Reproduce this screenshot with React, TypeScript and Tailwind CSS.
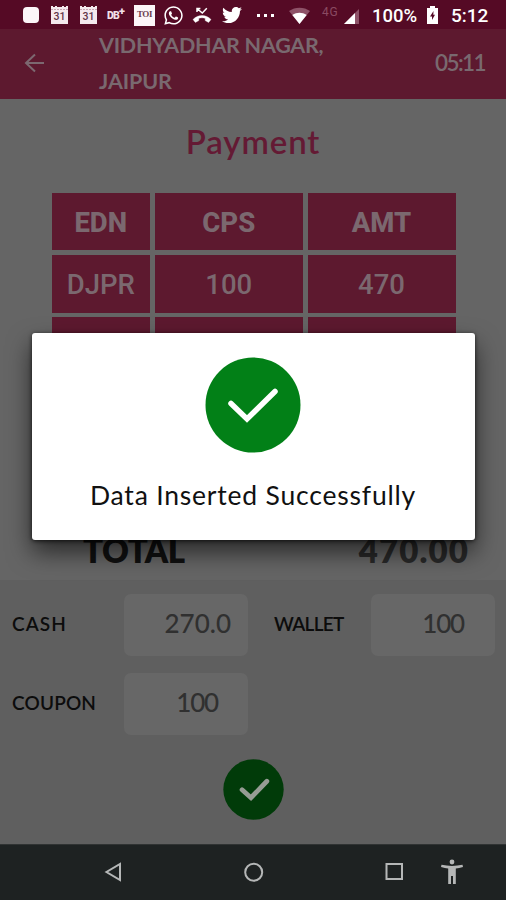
import type { ReactNode } from "react";
import { FaTwitter, FaWhatsapp } from "react-icons/fa";

const GEO = "font-['Lato','Open_Sans',sans-serif]";
const ROBOTO = "font-['Roboto',sans-serif]";

function Calendar() {
  return (
    <svg width="19" height="20" viewBox="0 0 19 20" className="shrink-0">
      <path d="M1 1h2v1h2V1h2v1h5V1h2v1h2V1h2v18H1z" fill="#f4e9ee" />
      <path d="M1 4.5h17" stroke="#b58a9b" strokeWidth=".7" strokeDasharray="2 1" />
      <text x="9.5" y="14.5" textAnchor="middle" fontSize="10.5" fontWeight="500" fill="#62364a" fontFamily="Roboto, sans-serif">31</text>
    </svg>
  );
}

function StatusBar() {
  return (
    <div className={`relative flex h-[29px] shrink-0 items-center bg-[#550a25] pt-px text-white ${ROBOTO}`}>
      <div className="ml-[23px] h-4 w-4 shrink-0 rounded-[4px] bg-[#fcf5f8]" />
      <div className="ml-[11px] flex"><Calendar /></div>
      <div className="ml-[10px] flex"><Calendar /></div>
      <div className="ml-[9px] flex w-[19px] items-start text-[10.5px] leading-4 font-black tracking-[-0.8px] text-[#f0dfe6]">
        <span className="pt-px">DB</span><span className="text-[11px] leading-[9px]">+</span>
      </div>
      <div className="ml-[8px] flex h-[21px] w-[21px] shrink-0 items-center justify-center bg-[#fcf5f8] font-['Liberation_Serif',serif] text-[9px] font-bold tracking-[-0.4px] text-[#6b3b4e]">TOI</div>
      <FaWhatsapp className="ml-[8px] shrink-0" size={21} />
      <svg className="ml-[8px] shrink-0" width="20" height="18" viewBox="0 0 20 18">
        <path d="M5 6V2.5H8.4M5.3 2.8L10.3 7L14.8 2.3" stroke="#fff" strokeWidth="1.5" fill="none" />
        <path d="M1 13.5C6 8.2 14 8.2 19 13.5L16.6 16.4L13.2 14.6V12.3C11 11.6 9 11.6 6.8 12.3V14.6L3.4 16.4Z" fill="#fff" stroke="#fff" strokeWidth=".4" strokeLinejoin="round" />
      </svg>
      <FaTwitter className="ml-[10px] shrink-0" size={20} />
      <div className="ml-[15px] flex gap-[4px]">
        <i className="h-[3px] w-[3px] bg-white" /><i className="h-[3px] w-[3px] bg-white" /><i className="h-[3px] w-[3px] bg-white" />
      </div>
      <svg className="ml-[15px] shrink-0" width="21" height="17" viewBox="0 0 21 17">
        <path d="M0 4C6-.5 15-.5 21 4L10.5 17Z" fill="#8e5268" />
        <path d="M3.3 8C8 5 13 5 17.7 8L10.5 17Z" fill="#fff" />
      </svg>
      <span className="ml-[12px] mb-[7px] w-[18px] text-[12px] leading-none tracking-[0.8px] text-[#8a4a62]">4G</span>
      <svg className="ml-[4px] mt-[2px] shrink-0" width="15" height="15" viewBox="0 0 15 15">
        <path d="M15 0V15H0Z" fill="#8e5268" /><path d="M11 4V15H0Z" fill="#fff" />
      </svg>
      <span className="ml-[13px] mt-[2px] w-[46px] text-[18.5px] leading-none font-medium whitespace-nowrap">100%</span>
      <svg className="ml-[9px] shrink-0" width="11" height="18" viewBox="0 0 11 18">
        <path d="M3 0H8V2H11V18H0V2H3Z" fill="#fff" />
        <path d="M6.5 5L3 10.5H5V14L8 8.8H6.3Z" fill="#550a25" />
      </svg>
      <span className="ml-[13px] mt-[1px] text-[19px] leading-none font-medium">5:12</span>
    </div>
  );
}

function Header() {
  return (
    <header className={`flex h-[70px] shrink-0 bg-[#5d192f] text-[#79696f] ${GEO}`}>
      <svg className="mt-[24px] ml-[24px] shrink-0" width="21" height="20" viewBox="0 0 21 20" fill="none" stroke="#7c6870" strokeWidth="2">
        <path d="M20 10H2M11 1.5L2 10L11 18.5" />
      </svg>
      <div className="ml-[54px] w-[315px] text-[21.5px] leading-9 font-bold">
        <div className="-mt-[2px] tracking-[-0.25px]">VIDHYADHAR NAGAR,</div>
        <div className="tracking-[-0.1px]">JAIPUR</div>
      </div>
      <div className="ml-[21px] pt-5 text-[22.5px] leading-7 font-semibold tracking-[-1.6px]">05:11</div>
    </header>
  );
}

function Cell({ children, bold = false }: { children?: ReactNode; bold?: boolean }) {
  return (
    <div className={`flex items-center justify-center bg-[#5d192f] pt-[3px] text-[#7b686f] ${ROBOTO} ${bold ? "text-[27.5px] font-extrabold" : "text-[27.5px] font-medium"}`}>
      {children}
    </div>
  );
}

function Field({ label, value, pad, labelStyle }: { label: string; value: string; pad: string; labelStyle: string }) {
  return (
    <div className="flex h-[62px] items-center">
      <span className={`pb-0.5 font-semibold text-[#0c0c0c] ${labelStyle}`}>{label}</span>
      <span className={`flex h-full w-[124px] items-center justify-end rounded-[7px] bg-[#676767] pb-[3px] text-[#303030] ${pad}`}>{value}</span>
    </div>
  );
}

function CheckCircle({ size, circle, mark, width, path }: { size: number; circle: string; mark: string; width: number; path: string }) {
  return (
    <svg width={size} height={size} viewBox="0 0 96 96" className="shrink-0">
      <circle cx="48" cy="48" r="47.5" fill={circle} />
      <path d={path} fill="none" stroke={mark} strokeWidth={width} strokeLinecap="round" />
    </svg>
  );
}

function NavigationBar() {
  return (
    <nav className="flex h-[57px] shrink-0 items-center border-t border-b border-t-[#303333] border-b-[#101313] bg-[#1e2222] pb-0.5 text-[#b5b7b7]">
      <svg className="ml-[104px] shrink-0" width="19" height="20" viewBox="0 0 19 20" fill="none" stroke="currentColor" strokeWidth="2"><path d="M16 2V18L2.5 10Z" /></svg>
      <svg className="ml-[121px] shrink-0" width="20" height="20" viewBox="0 0 20 20" fill="none" stroke="currentColor" strokeWidth="2"><circle cx="9.7" cy="10.2" r="8.5" /></svg>
      <svg className="ml-[121px] shrink-0" width="19" height="19" viewBox="0 0 19 19" fill="none" stroke="currentColor" strokeWidth="2"><rect x="1.5" y="2" width="15.5" height="15" /></svg>
      <svg className="ml-[37px] shrink-0" width="22" height="26" viewBox="0 0 22 26" fill="currentColor"><circle cx="11" cy="3" r="2.4" /><path d="M.5 5.8Q11 8 21.5 5.8L22 8Q18 9.2 14.8 9.5V25H12V17H10V25H7.2V9.5Q4 9.2 0 8Z" /></svg>
    </nav>
  );
}

export default function App() {
  return (
    <div className="relative flex h-[900px] w-[506px] flex-col overflow-hidden bg-[#656565]">
      <StatusBar />
      <Header />
      <main className={`flex h-[481px] shrink-0 flex-col items-center ${GEO}`}>
        <h1 className="mt-[22px] h-[40px] text-[33px] leading-10 font-semibold tracking-[0.9px] text-[#641a34]">Payment</h1>
        <div className="mt-[32px] ml-px grid w-[404px] shrink-0 grid-cols-[98.5px_148.5px_148px] grid-rows-[57px_58px_58px] gap-x-[4.5px] gap-y-[4.5px]">
          <Cell bold>EDN</Cell><Cell bold>CPS</Cell><Cell bold>AMT</Cell>
          <Cell>DJPR</Cell><Cell>100</Cell><Cell>470</Cell>
          <Cell /><Cell /><Cell />
        </div>
        <div className="mt-auto mb-[11px] flex w-full items-center justify-between pr-[37px] pl-[83px] text-[33px] leading-[38px] font-extrabold">
          <span className="tracking-[-0.6px] text-[#101010]">TOTAL</span>
          <span className="tracking-[1.1px] text-[#292929]">470.00</span>
        </div>
      </main>
      <section className={`flex h-[264px] shrink-0 flex-col bg-[#5f5f5f] pt-[14px] ${GEO}`}>
        <div className="flex pl-[12px] text-[26px] font-medium">
          <Field label="CASH" value="270.0" pad="pr-[17px]" labelStyle="w-[112px] text-[19px] tracking-[1.1px]" />
          <div className="ml-[26px]"><Field label="WALLET" value="100" pad="pr-[31px] tracking-[-1.2px]" labelStyle="w-[97px] text-[19px] tracking-[-0.7px]" /></div>
        </div>
        <div className="mt-[17px] pl-[12px] text-[26px] font-medium"><Field label="COUPON" value="100" pad="pr-[30px] tracking-[-1.2px]" labelStyle="w-[112px] text-[19px] tracking-[0.15px]" /></div>
        <div className="mt-[24px] flex justify-center"><CheckCircle size={61} circle="#013b09" mark="#969c94" width={7.5} path="M30 48.5L44 61L69 35" /></div>
      </section>
      <NavigationBar />
      <div role="dialog" className={`absolute top-[333px] left-[32px] flex h-[207px] w-[443px] flex-col items-center rounded-[3px] bg-white pt-[24px] pr-px shadow-[0_12px_24px_rgba(0,0,0,0.6),0_1px_4px_rgba(0,0,0,0.7)] ${GEO}`}>
        <CheckCircle size={96} circle="#028017" mark="#ffffff" width={5.5} path="M26 46.5L42 62L70 34.5" />
        <p className="mt-[24px] text-[26.5px] leading-9 tracking-[0.8px] whitespace-nowrap text-[#111]">Data Inserted Successfully</p>
      </div>
    </div>
  );
}
